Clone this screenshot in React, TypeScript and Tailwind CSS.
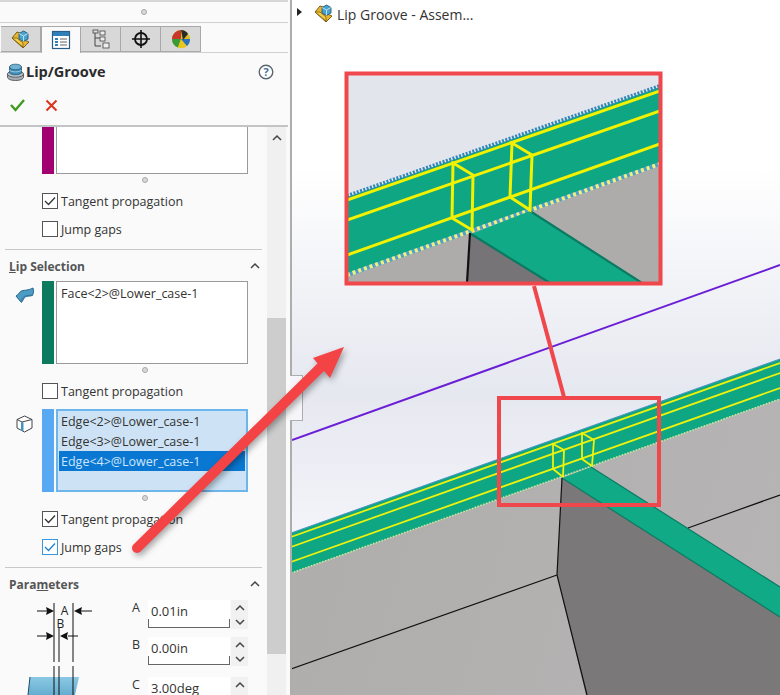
const font = "font-['Open_Sans','Noto_Sans',sans-serif]"

const Chevron = ({ className = '', down = false }: { className?: string; down?: boolean }) => (
  <svg width="12" height="8" viewBox="0 0 12 8" className={className}>
    <path d={down ? 'M2 2l4 4 4-4' : 'M2 6l4-4 4 4'} fill="none" stroke="#444" strokeWidth="1.5" />
  </svg>
)

const Grip = () => (
  <div className="h-[11px] w-[206px] flex items-center justify-center ml-[42px]">
    <span className="w-[6px] h-[6px] rounded-full bg-[#d8d8d8] border border-[#a8a8a8]" />
  </div>
)

const Check = ({ label, checked = false, blue = false }: { label: string; checked?: boolean; blue?: boolean }) => (
  <div className="h-[28px] flex items-center ml-[42px]">
    <span className={`w-[16px] h-[16px] border bg-white flex items-center justify-center ${blue ? 'border-[#3c96dc]' : 'border-[#555]'}`}>
      {checked && (
        <svg width="12" height="10" viewBox="0 0 12 10">
          <path d="M1 5l3.5 3.5L11 1.5" fill="none" stroke={blue ? '#1f7fd0' : '#333'} strokeWidth="1.3" />
        </svg>
      )}
    </span>
    <span className="ml-[3px] pt-[2px] text-[12.5px] text-[#333]">{label}</span>
  </div>
)

const SectionHead = ({ title, under, rest, className = '' }: { title: string; under: string; rest: string; className?: string }) => (
  <div className={`flex items-center justify-between pl-[9px] pr-[6px] font-bold text-[12px] text-[#555] ${className}`}>
    <span className="pt-[2px]">
      {title}
      <span className="underline">{under}</span>
      {rest}
    </span>
    <Chevron />
  </div>
)

const PartIcon = () => (
  <svg width="19" height="19" viewBox="0 0 19 19">
    <path d="M1 8l5-6 3 1 2 6 7 3-6 6z" fill="#e9b52c" stroke="#6f5410" strokeWidth="0.9" />
    <path d="M1 8l11 9v-4L6 8z" fill="#f3cc45" stroke="#6f5410" strokeWidth="0.7" />
    <path d="M8 3.5L12.5 1 17 3.5v5.5L12.5 11.5 8 9z" fill="#4aa3cf" stroke="#245a78" strokeWidth="0.9" />
    <path d="M8 3.5l4.5 2.5L17 3.5M12.5 6v5.5" fill="none" stroke="#d4eef8" strokeWidth="0.8" />
  </svg>
)

const tabIcons = [
  <PartIcon />,
  <svg width="20" height="20" viewBox="0 0 20 20">
    <rect x="1.5" y="1.5" width="17" height="17" fill="#fff" stroke="#2a5d85" strokeWidth="1.2" />
    <rect x="2" y="2" width="16" height="4" fill="#2f7fb8" />
    <path d="M4 9h3M4 12h3M4 15h3" stroke="#2f7fb8" strokeWidth="2" />
    <path d="M9 9h7M9 12h7M9 15h7" stroke="#666" strokeWidth="1.2" />
  </svg>,
  <svg width="20" height="20" viewBox="0 0 20 20">
    <path d="M4 2v15h6M4 9h6" fill="none" stroke="#444" strokeWidth="1" />
    <rect x="2" y="1" width="5" height="3" fill="#ddd" stroke="#444" strokeWidth="0.8" />
    <rect x="9" y="2" width="5" height="4" fill="#eee" stroke="#444" strokeWidth="0.8" />
    <rect x="9" y="8" width="5" height="4" fill="#eee" stroke="#444" strokeWidth="0.8" />
    <rect x="12" y="14" width="6" height="5" fill="#eee" stroke="#444" strokeWidth="0.8" />
  </svg>,
  <svg width="20" height="20" viewBox="0 0 20 20">
    <circle cx="10" cy="10" r="6" fill="none" stroke="#111" strokeWidth="1.8" />
    <path d="M10 1v18M1 10h18" stroke="#111" strokeWidth="1.6" />
  </svg>,
  <svg width="20" height="20" viewBox="0 0 20 20">
    <circle cx="10" cy="10" r="9" fill="#d9c21f" />
    <path d="M10 10L1 10A9 9 0 0 1 10 1z" fill="#c8372d" />
    <path d="M10 10L1 10A9 9 0 0 0 7 18.5z" fill="#3a9a35" />
    <path d="M10 10L7 18.5A9 9 0 0 0 16 17z" fill="#e8c81e" />
    <path d="M10 10L16 17A9 9 0 0 0 19 10z" fill="#2d6fc0" />
    <path d="M10 1A9 9 0 0 1 17 5L12 11z" fill="#2a2a2a" />
  </svg>,
]

const Tabs = () => (
  <div className="h-[31px] border-t border-b border-[#cfcfcf] w-[288px] flex items-end pl-[1px]">
    {tabIcons.map((icon, i) => (
      <div
        key={i}
        className={`w-[40px] flex items-center justify-center border-t border-[#a8a8a8] ${i === 1 ? 'bg-[#fafafa] h-[27px] -mb-[1px] border-x relative z-10' : 'bg-[#d8d8d8] h-[26px] border-r border-b border-[#9b9b9b]'}`}
      >
        {icon}
      </div>
    ))}
  </div>
)

const Header = () => (
  <div className="h-[74px] border-b-2 border-[#c4c4c4] w-[288px]">
    <div className="h-[37px] flex items-center pl-[7px] pr-[14px]">
      <svg width="17" height="18" viewBox="0 0 17 18">
        <path d="M0.5 11v3c0 2 3 3.5 8 3.5s8-1.500 8-3.500v-3z" fill="#a5adb3" stroke="#3f474d" strokeWidth="0.8" />
        <ellipse cx="8.500" cy="11" rx="8" ry="3.200" fill="#c4ccd2" stroke="#3f474d" strokeWidth="0.8" />
        <path d="M2.500 4v6c1 2.500 11 2.500 12 0V4z" fill="#3f8cb3" stroke="#2b5d78" strokeWidth="0.8" />
        <path d="M2.500 7c1 2.500 11 2.500 12 0" fill="none" stroke="#a7d3e8" strokeWidth="0.9" />
        <ellipse cx="8.500" cy="4" rx="6" ry="2.800" fill="#6fb2d3" stroke="#2b5d78" strokeWidth="0.8" />
      </svg>
      <span className="ml-[2px] font-bold text-[14.500px] text-[#2b2b2b]">Lip/Groove</span>
      <svg width="16" height="16" viewBox="0 0 16 16" className="ml-auto">
        <circle cx="8" cy="8" r="6.800" fill="#fff" stroke="#5a6672" strokeWidth="1.400" />
        <text x="8" y="12" textAnchor="middle" fontSize="11" fontWeight="700" fill="#3f6f96" fontFamily="Open Sans">?</text>
      </svg>
    </div>
    <div className="h-[30px] flex items-center pl-[10px] gap-[20px]">
      <svg width="15" height="14" viewBox="0 0 15 14">
        <path d="M1 7l4.500 5L14 2" fill="none" stroke="#3f9a1e" strokeWidth="2.400" />
      </svg>
      <svg width="13" height="13" viewBox="0 0 13 13">
        <path d="M1.500 1.500l10 10M11.500 1.500l-10 10" fill="none" stroke="#e0301e" strokeWidth="2" />
      </svg>
    </div>
  </div>
)

const ColorStrip = ({ color }: { color: string }) => <span className={`w-[12px] mr-[2px] shrink-0 ${color}`} />

const FaceIcon = () => (
  <svg width="19" height="17" viewBox="0 0 19 17">
    <path d="M1 9c3-1 3-5 7-5.500s6-.5 10-2.500c1 3 .5 5-.5 7.500-3 1-6 0-8 2-1 2-2 3-3 5-2-2-4-4.500-5.500-6.500z" fill="#4c9cc6" stroke="#1f5f85" strokeWidth="0.9" />
    <path d="M6 14c1-3 2-4 4-5s5-.5 7-1" fill="none" stroke="#2c6f97" strokeWidth="0.7" />
  </svg>
)

const EdgeIcon = () => (
  <svg width="17" height="18" viewBox="0 0 17 18">
    <path d="M8.500 1L16 4.500v8.500L8.500 17 1 13V4.500z" fill="#fff" stroke="#444" strokeWidth="1" />
    <path d="M1 4.500L6 7v9" fill="none" stroke="#444" strokeWidth="1" />
    <path d="M6 7l10-2.500" fill="none" stroke="#444" strokeWidth="1" />
    <path d="M5 7.500h2.500V16H5z" fill="#3f94c6" />
  </svg>
)

const Spin = () => (
  <div className="w-[17px] h-[29px] ml-[1px] bg-[#f1f1f1] flex flex-col items-center justify-center gap-[6px]">
    <Chevron />
    <Chevron down />
  </div>
)

const Param = ({ label, value, className = '' }: { label: string; value: string; className?: string }) => (
  <div className={`flex ${className}`}>
    <span className="w-[18px] text-[12.500px] text-[#333] leading-[16px] pl-[2px]">{label}</span>
    <div className="w-[82px] h-[28px] bg-white relative text-[13px] text-[#333] pl-[3px] pt-[2px] leading-[18px]">
      {value}
      <span className="absolute left-0 right-0 bottom-0 h-[9px] border-x border-b border-[#666]" />
    </div>
    <Spin />
  </div>
)

const Diagram = () => (
  <svg width="130" height="95" viewBox="0 600 130 95" className="shrink-0">
    <defs>
      <linearGradient id="lipBlue" x1="0" y1="0" x2="0" y2="1">
        <stop offset="0" stopColor="#8ac9e4" />
        <stop offset="1" stopColor="#66add0" />
      </linearGradient>
    </defs>
    <path d="M30 677h49l-4 18H28z" fill="url(#lipBlue)" />
    <path d="M30 677l-2 18" stroke="#1d4a63" strokeWidth="1" />
    <path d="M54 603v59M59 628v34M73 603v59M54 666v29M59 666v29M73 666v29" stroke="#111" strokeWidth="1" fill="none" />
    <path d="M37 611h12M92 611H80M37 636h12M78 636h-10" stroke="#111" strokeWidth="1" />
    <path d="M54 611l-8-4 1 4-1 4zM74 611l8-4-1 4 1 4zM54 636l-8-4 1 4-1 4zM60 636l8-4-1 4 1 4z" fill="#111" />
    <text x="64.500" y="615" textAnchor="middle" fontSize="12" fill="#222" fontFamily="Open Sans">A</text>
    <text x="60.500" y="628" textAnchor="middle" fontSize="12" fill="#222" fontFamily="Open Sans">B</text>
  </svg>
)

const ScrollContent = () => (
  <div className="w-[267px] shrink-0">
    <div className="flex ml-[42px] h-[47px]">
      <ColorStrip color="bg-[#a00070]" />
      <div className="w-[192px] bg-white border-x border-b border-[#9a9a9a]" />
    </div>
    <Grip />
    <div className="mt-[2px] mb-[6px]">
      <Check label="Tangent propagation" checked />
      <Check label="Jump gaps" />
    </div>
    <div className="border-t border-[#c8c8c8] mx-[5px]" />

    <SectionHead title="" under="L" rest="ip Selection" className="h-[31px]" />
    <div className="flex h-[83px]">
      <div className="w-[42px] pl-[15px] pt-[6px] shrink-0"><FaceIcon /></div>
      <ColorStrip color="bg-[#0b7a5e]" />
      <div className="w-[192px] bg-white border border-[#9a9a9a] text-[12.500px] text-[#333] pl-[4px] pt-[2px] leading-[20px]">
        Face&lt;2&gt;@Lower_case-1
      </div>
    </div>
    <Grip />
    <div className="mt-[2px] mb-[4px]">
      <Check label="Tangent propagation" />
    </div>
    <div className="flex h-[83px]">
      <div className="w-[42px] pl-[16px] pt-[6px] shrink-0"><EdgeIcon /></div>
      <ColorStrip color="bg-[#58a8f4]" />
      <div className="w-[192px] bg-[#cde3f5] border-2 border-[#6db6ec] text-[12.500px] text-[#333] leading-[22px]">
        <div className="h-[20px] pl-[3px]">Edge&lt;2&gt;@Lower_case-1</div>
        <div className="h-[20px] pl-[3px]">Edge&lt;3&gt;@Lower_case-1</div>
        <div className="h-[20px] pl-[2px] mx-[1px] bg-[#0a78d2] text-[#cfe6fa]">Edge&lt;4&gt;@Lower_case-1</div>
      </div>
    </div>
    <Grip />
    <div className="mt-[2px] mb-[6px]">
      <Check label="Tangent propagation" checked />
      <Check label="Jump gaps" checked blue />
    </div>
    <div className="border-t border-[#c8c8c8] mx-[5px]" />

    <SectionHead title="Para" under="m" rest="eters" className="h-[32px]" />
    <div className="flex">
      <Diagram />
      <div className="shrink-0">
        <Param label="A" value="0.01in" className="mb-[8px]" />
        <Param label="B" value="0.00in" className="mb-[11px]" />
        <Param label="C" value="3.00deg" />
      </div>
    </div>
  </div>
)

const Scrollbar = () => (
  <div className="w-[19px] bg-[#f0f0f0] flex flex-col items-center shrink-0">
    <div className="h-[191px] w-full pt-[7px] flex justify-center">
      <Chevron />
    </div>
    <div className="h-[336px] w-full bg-[#cdcdcd]" />
  </div>
)

const Panel = () => (
  <aside className="w-[292px] h-full shrink-0 border-r-2 border-[#adadad] bg-[#fafafa] overflow-hidden">
    <div className="h-[22px] flex items-center justify-center w-[288px] border-t-2 border-[#d6d6d6]">
      <span className="w-[6px] h-[6px] rounded-full bg-[#d8d8d8] border border-[#a8a8a8]" />
    </div>
    <Tabs />
    <Header />
    <div className="flex h-[569px] overflow-hidden">
      <ScrollContent />
      <Scrollbar />
    </div>
  </aside>
)

const Canvas = () => (
  <svg width="488" height="695" viewBox="292 0 488 695" className="block">
    <defs>
      <linearGradient id="sky" gradientUnits="userSpaceOnUse" x1="292" y1="0" x2="292" y2="560">
        <stop offset="0.3" stopColor="#ffffff" />
        <stop offset="0.7" stopColor="#e6e8f0" />
        <stop offset="1" stopColor="#f6f6fb" />
      </linearGradient>
      <linearGradient id="grey" gradientUnits="userSpaceOnUse" x1="300" y1="560" x2="780" y2="695">
        <stop offset="0" stopColor="#b0aeac" />
        <stop offset="1" stopColor="#b6b4b5" />
      </linearGradient>
      <clipPath id="zoomClip">
        <rect x="347" y="74" width="313" height="209" />
      </clipPath>
    </defs>
    <rect x="292" y="0" width="488" height="695" fill="url(#sky)" />
    <path d="M292 440L780 265" stroke="#6a1fd6" strokeWidth="2" />

    {/* model */}
    <path d="M291 573L780 399V695H291z" fill="url(#grey)" />
    <path d="M291 533L780 359V399L291 573z" fill="#0fa783" />
    <path d="M291 533L780 359" stroke="#4a94c4" strokeWidth="1" />
    <path d="M291 573L780 399" stroke="#cfe49a" strokeWidth="1.600" strokeDasharray="1.500 1.500" />
    <path d="M291 537L780 363M291 547L780 373M291 562L780 388" stroke="#eef20c" strokeWidth="1.800" />
    <path d="M553 444l11 6-1 27-10-8zM582 433l12 7-2 26-10-7z" fill="none" stroke="#eef20c" strokeWidth="1.800" />
    <path d="M562 478L780 617V695H586L557 575z" fill="#7a7879" />
    <path d="M562 478L591 467L780 587V617z" fill="#10ab86" />
    <path d="M562 478L780 617M591 467L780 587" stroke="#0b7a62" strokeWidth="1.200" />
    <path d="M562 478L557 575L587 695M557 575L291 669M688 528L780 495" fill="none" stroke="#111" strokeWidth="1.200" />

    {/* small marker */}
    <path d="M534 286L564 397" stroke="#f0474c" strokeWidth="4" />
    <rect x="499" y="398" width="160" height="107" fill="none" stroke="#f0474c" strokeWidth="4" />

    {/* magnified view */}
    <g clipPath="url(#zoomClip)">
      <rect x="347" y="74" width="313" height="209" fill="#e3e5ed" />
      <path d="M347 197L660 87V163L347 274z" fill="#0fa783" />
      <path d="M347 274L660 163V283H347z" fill="#aeacab" />
      <path d="M347 196L660 86" stroke="#2f86b8" strokeWidth="4" strokeDasharray="2 1.500" />
      <path d="M347 200L660 91M347 220L660 111M347 255L660 144" stroke="#f2f200" strokeWidth="3" />
      <path d="M347 275L660 164" stroke="#4f9fd0" strokeWidth="4" />
      <path d="M347 275L660 164" stroke="#f2f07a" strokeWidth="4" strokeDasharray="3 3" />
      <path d="M471 234L530 211L642 283H550z" fill="#10ab86" />
      <path d="M471 234L550 283H467z" fill="#767476" />
      <path d="M471 234L550 283M530 211L642 283" stroke="#0b7a62" strokeWidth="2.200" />
      <path d="M470 233L467 283" stroke="#111" strokeWidth="2.200" />
      <path d="M453 163l20 12-1 55-20-12zM512 143l20 12-2 55-20-13z" fill="none" stroke="#f2f200" strokeWidth="3" />
    </g>
    <rect x="346.500" y="73.500" width="314" height="210" fill="none" stroke="#f0474c" strokeWidth="4" />
  </svg>
)

const App = () => (
  <div className={`relative w-[780px] h-[695px] overflow-hidden flex bg-white ${font}`}>
    <Panel />
    <main className="relative flex-1">
      <Canvas />
      <div className="absolute top-[4px] left-[5px] flex items-center h-[20px] text-[14px] text-[#333]">
        <span className="w-0 h-0 -translate-y-[2px] border-y-[4px] border-y-transparent border-l-[5px] border-l-[#222]" />
        <span className="ml-[12px] mr-[4px] -translate-y-[1px]"><PartIcon /></span>
        Lip Groove - Assem...
      </div>
    </main>
    {/* flyout notch on the panel edge */}
    <div className="absolute left-[290px] top-[375px] w-[13px] h-[46px] border-y border-r border-[#adadad] bg-[#f6f6fa]" />
    {/* pointer arrow over everything */}
    <svg width="780" height="695" viewBox="0 0 780 695" className="absolute inset-0 pointer-events-none drop-shadow-[2px_3px_3px_rgba(0,0,0,0.35)]">
      <path d="M137 548L322 366" stroke="#f44345" strokeWidth="10" strokeLinecap="round" />
      <path d="M344 347L313 358L330 378z" fill="#f44345" />
    </svg>
  </div>
)

export default App
